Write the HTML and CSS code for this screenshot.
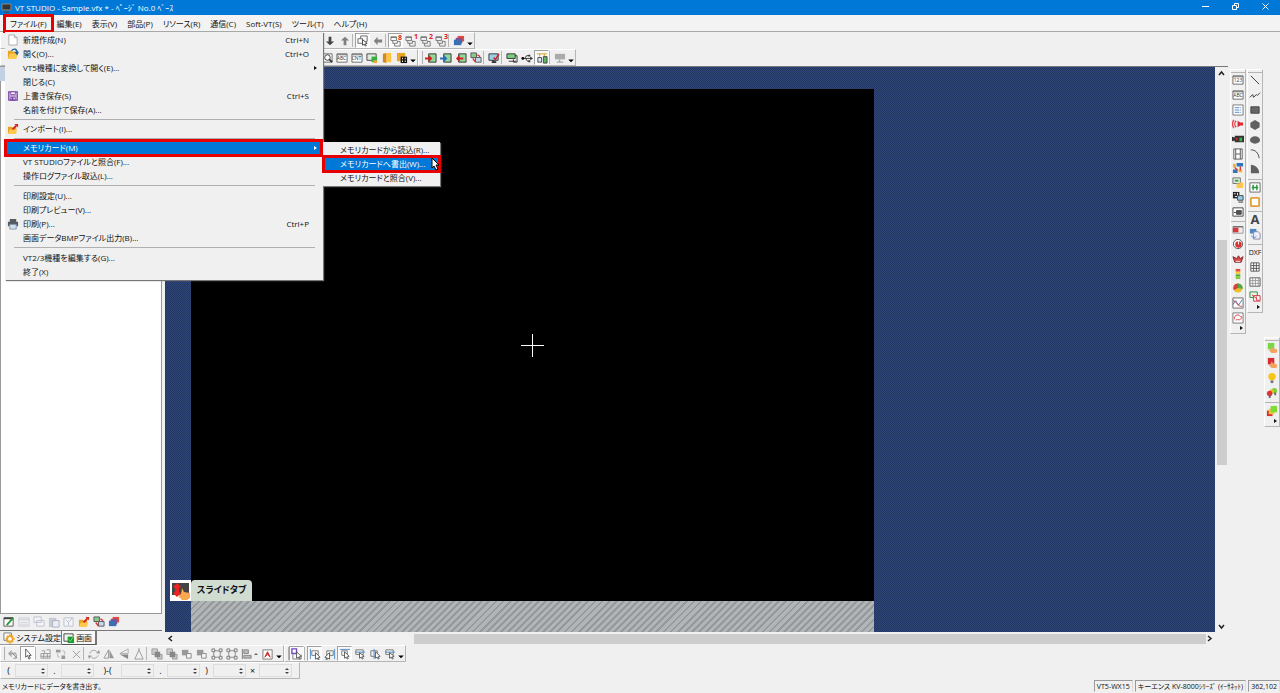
FILE: index.html
```
<!DOCTYPE html>
<html lang="ja">
<head>
    <meta charset="UTF-8">
    <meta name="viewport" content="width=device-width, initial-scale=1.0">
    <title>VT STUDIO</title>
    <link rel="stylesheet" href="styles.css">
</head>
<body>
    <!-- Icon sprite -->
    <svg class="sprite" aria-hidden="true">
        <symbol id="file" viewBox="0 0 13 13"><path d="M2 1h6l3 3v8H2z" fill="#fff" stroke="#aaa"/><path d="M8 1v3h3" fill="none" stroke="#aaa"/></symbol>
        <symbol id="open" viewBox="0 0 13 13"><path d="M1 3h4l1 1h4v7H1z" fill="#e8a321"/><path d="M3 6h9l-2 6H1z" fill="#ffc94d"/><path d="M5 3c2-3 6-2 6 2" fill="none" stroke="#1e6296" stroke-width="1.500"/><path d="M8 4h5l-2 4z" fill="#1e6296"/></symbol>
        <symbol id="import" viewBox="0 0 13 13"><path d="M1 4h4l1 1h4v6H1z" fill="#e8a321"/><path d="M3 7h8l-2 5H1z" fill="#ffc94d"/><path d="M6 7l4-4" stroke="#d8231b" stroke-width="2"/><path d="M8 1h4v4z" fill="#d8231b"/></symbol>
        <symbol id="save" viewBox="0 0 13 13"><path d="M2 2h9v9H2z" fill="#fff" stroke="#7840a4" stroke-width="1.500"/><path d="M4 2h5v3H4z" fill="#fff" stroke="#7840a4"/><path d="M3 6.500h7M4 8h5v3H4z" fill="none" stroke="#7840a4"/><path d="M5 8h2v3H5z" fill="#7840a4"/></symbol>
        <symbol id="print" viewBox="0 0 13 13"><path d="M3 1h7v3H3zM1 4h11v5H1z" fill="#555b62"/><path d="M3 7h7v5H3z" fill="#cfe0ee" stroke="#8799a8"/></symbol>
        <symbol id="down" viewBox="0 0 13 13"><path d="M5 2h3v5h3l-4.500 4L2 7h3z" fill="#444"/></symbol>
        <symbol id="up" viewBox="0 0 13 13"><path d="M5 11h3V6h3L6.500 2 2 6h3z" fill="#808080"/></symbol>
        <symbol id="left" viewBox="0 0 13 13"><path d="M11 5v3H6v3L2 6.500 6 2v3z" fill="#808080"/></symbol>
        <symbol id="pick" viewBox="0 0 13 13"><path d="M4 4V1h7v6H9M1 4h5v5H1z" fill="none" stroke="#666"/><path d="M6 5l5 4-2 .5 1 2-1 .5-1-2-2 1z" fill="#fff" stroke="#444"/></symbol>
        <symbol id="win" viewBox="0 0 13 13"><path d="M1 2h6v4H1zM3 6v3h5V6M5 9v3h6V7H8" fill="none" stroke="#777"/><path d="M1 2.500h6" stroke="#666"/></symbol>
        <symbol id="stack" viewBox="0 0 13 13"><path d="M5 1h7v6H5z" fill="#e54b3d"/><path d="M3 3h7v6H3z" fill="#8b4c87"/><path d="M1 5h8v6H1z" fill="#3b6fb4"/></symbol>
        <symbol id="caret" viewBox="0 0 8 13"><path d="M1 8h6L4 11z" fill="#000"/></symbol>
        <symbol id="search" viewBox="0 0 13 13"><path d="M1 2h11v9H1z" fill="#fff" stroke="#666"/><circle cx="7" cy="6" r="3" fill="#fff" stroke="#333"/><path d="M9 8l3 3" stroke="#333" stroke-width="2"/></symbol>
        <symbol id="frame" viewBox="0 0 13 13"><path d="M1 2h11v9H1zM1 3h11" fill="#fff" stroke="#666"/></symbol>
        <symbol id="monhand" viewBox="0 0 13 13"><path d="M1 2h10v7H1z" fill="#dfe9df" stroke="#444"/><path d="M6 5h6v6H6z" fill="#31b13b"/><path d="M8 9h4v3H8z" fill="#f5a53c"/></symbol>
        <symbol id="book" viewBox="0 0 13 13"><path d="M2 2l4-1v11l-4-1z" fill="#d18b1a"/><path d="M6 1h5v10H6z" fill="#ffc33d"/></symbol>
        <symbol id="bookgrid" viewBox="0 0 13 13"><path d="M1 1h9v9H1z" fill="#e9a527"/><path d="M5 5h7v7H5z" fill="#111"/><path d="M6.500 7h1M9.500 7h1M6.500 10h1M9.500 10h1" stroke="#fff" stroke-width="1.500"/></symbol>
        <symbol id="sendred" viewBox="0 0 13 13"><path d="M4 2h8v9H4z" fill="#94d69a" stroke="#333"/><path d="M0 6h4V3l4 4-4 4V8H0z" fill="#d42020"/></symbol>
        <symbol id="sendblue" viewBox="0 0 13 13"><path d="M4 2h8v9H4z" fill="#94d69a" stroke="#333"/><path d="M0 6h4V3l4 4-4 4V8H0z" fill="#2b6fb5"/></symbol>
        <symbol id="recv" viewBox="0 0 13 13"><path d="M4 2h8v9H4z" fill="#94d69a" stroke="#333"/><path d="M9 6H5V3L1 7l4 4V8h4z" fill="#d42020"/></symbol>
        <symbol id="compare" viewBox="0 0 13 13"><path d="M1 1h6v5H1z" fill="#8ccb90" stroke="#555"/><path d="M6 6h6v5H6z" fill="#c5dcf0" stroke="#555"/><path d="M3 7l3 4M8 3l3 2" stroke="#d83232" stroke-width="1.500"/></symbol>
        <symbol id="monitor" viewBox="0 0 13 13"><path d="M1 2h10v7H1z" fill="#9bd0e8" stroke="#333"/><path d="M4 11h5M6 9v2" stroke="#333" stroke-width="2"/><path d="M6 6l2 2 4-6" fill="none" stroke="#d42020" stroke-width="1.500"/></symbol>
        <symbol id="plc" viewBox="0 0 13 13"><path d="M1 2h9v5H1z" fill="#79cf81" stroke="#333"/><path d="M3 10h8M10 4h2v7H8V8" fill="none" stroke="#333"/></symbol>
        <symbol id="usb" viewBox="0 0 13 13"><path d="M1 7h10M4 7l2-3h3M5 7l2 3h2" fill="none" stroke="#333"/><circle cx="2" cy="7" r="1.500"/><path d="M8 3h2v2H8zM8 9h2v2H8zM10 5l3 2-3 2z" fill="#333"/></symbol>
        <symbol id="net" viewBox="0 0 13 13"><path d="M1 2h11M4 2v3M9 2v3" stroke="#d19a22"/><path d="M2 6h4v5H2z" fill="#d8edff" stroke="#444"/><path d="M8 5h4v7H8z" fill="#61b367" stroke="#444"/></symbol>
        <symbol id="screenoff" viewBox="0 0 13 13"><path d="M1 2h11v6H1z" fill="#aaa"/><path d="M6 8v3M3 11h7" stroke="#aaa" stroke-width="1.500"/></symbol>
        <symbol id="edit" viewBox="0 0 13 13"><path d="M1 2h10v9H1z" fill="#fff" stroke="#555"/><path d="M1 2.500h10" stroke="#444" stroke-width="2"/><path d="M4 10l7-8" stroke="#27983a" stroke-width="2"/></symbol>
        <symbol id="ghostlist" viewBox="0 0 13 13"><path d="M1 2h11v9H1zM1 4h11M3 7h3M7 7h3M3 9h3M7 9h3" fill="none" stroke="#c8ccd6"/></symbol>
        <symbol id="ghostcopy" viewBox="0 0 13 13"><path d="M1 1h8v6H1zM4 5h8v6H4z" fill="#f5f5f8" stroke="#bcc1cf"/></symbol>
        <symbol id="ghostpaste" viewBox="0 0 13 13"><path d="M1 2h8v10H1z" fill="#c5cad6"/><path d="M5 5h7v7H5z" fill="#eceef3" stroke="#aab0c0"/></symbol>
        <symbol id="ghostset" viewBox="0 0 13 13"><path d="M1 2h10v9H1z" fill="#f5f5f8" stroke="#bcc1cf"/><path d="M3 4l3 3 4-5M6 7v3" fill="none" stroke="#b3bccf"/></symbol>
        <symbol id="gear" viewBox="0 0 13 13"><path d="M1 1h8v8H1z" fill="#fff" stroke="#777"/><circle cx="7.500" cy="7.500" r="3" fill="#fff" stroke="#efa51e" stroke-width="2"/><path d="M7.500 2.500v2M7.500 11v2M2.500 7.500h2M11 7.500h2M4 4l1 1M11 11l-1-1M11 4l-1 1M4 11l1-1" stroke="#efa51e" stroke-width="1.500"/></symbol>
        <symbol id="screen" viewBox="0 0 13 13"><path d="M1 2h10v8H1z" fill="#eef5ee" stroke="#444"/><path d="M5 5h7v7H5z" fill="#1e9b37"/><path d="M6 8l2 2 4-6" fill="none" stroke="#7fda6b"/></symbol>
        <symbol id="undo" viewBox="0 0 13 13"><path d="M1 6l4-4v3h5v2H5v3z" fill="#aaa"/><path d="M6 6l5 5M10 7v4H7" fill="none" stroke="#888"/></symbol>
        <symbol id="cursor" viewBox="0 0 13 13"><path d="M4 1v9l2-2 1.500 4 1.500-1-1.500-3H10z" fill="#fff" stroke="#555"/></symbol>
        <symbol id="blocks" viewBox="0 0 13 13"><path d="M1 6h10v5H1zM2 3h3v3M7 2h4v4M4 6v5M8 6v5M1 9h10" fill="none" stroke="#999"/></symbol>
        <symbol id="swap" viewBox="0 0 13 13"><path d="M1 2h5v3H1zM7 8h4v4H7z" fill="#999"/><path d="M8 3c3 0 3 2 2 4M5 10C2 10 3 8 3 6" fill="none" stroke="#aaa"/></symbol>
        <symbol id="cross" viewBox="0 0 13 13"><path d="M3 3l8 8M11 3l-8 8" stroke="#999"/></symbol>
        <symbol id="rotate" viewBox="0 0 13 13"><path d="M2 6c1-4 6-5 8-1M11 8c-2 4-6 4-8 1" fill="none" stroke="#999"/><path d="M9 6h4l-1-4zM4 8H0l1 4z" fill="#999"/></symbol>
        <symbol id="mirror" viewBox="0 0 13 13"><path d="M6 2v9H1z" fill="none" stroke="#999"/><path d="M7 2v9h5z" fill="#999"/></symbol>
        <symbol id="flip" viewBox="0 0 13 13"><path d="M2 6h9V1z" fill="none" stroke="#aaa"/><path d="M2 7h9v5z" fill="#888"/></symbol>
        <symbol id="tri" viewBox="0 0 13 13"><path d="M6.500 2L11 12M6.500 2L2 12h9M6.500 0v3" fill="none" stroke="#999"/></symbol>
        <symbol id="front" viewBox="0 0 13 13"><path d="M1 1h6v6H1zM7 7h5v5H7z" fill="#ccc" stroke="#999"/><path d="M4 4h6v6H4z" fill="#888"/></symbol>
        <symbol id="back" viewBox="0 0 13 13"><path d="M1 2h7v6H1z" fill="#999"/><path d="M6 6h5v5H6z" fill="#f5f5f5" stroke="#888"/></symbol>
        <symbol id="group" viewBox="0 0 13 13"><path d="M3 3h7v7H3z" fill="none" stroke="#888"/><path d="M1 1h3v3H1zM9 1h3v3H9zM1 9h3v3H1zM9 9h3v3H9z" fill="#f0f0f0" stroke="#777"/></symbol>
        <symbol id="align" viewBox="0 0 13 13"><path d="M1.500 1v11" stroke="#777"/><path d="M3 2h5v4H3zM3 8h8v3H3z" fill="#bbb" stroke="#888"/></symbol>
        <symbol id="fonta" viewBox="0 0 13 13"><path d="M1 2h10v10H1z" fill="#fff" stroke="#777"/><path d="M3 10l3-6 3 6-3-3z" fill="#c33" stroke="#c33"/></symbol>
        <symbol id="snap" viewBox="0 0 13 13"><path d="M1 1h5v5H1z" fill="#fff" stroke="#7348bf" stroke-width="1.500"/><path d="M2 7v5h9V7" fill="none" stroke="#777"/><path d="M6 4l5 5-2 .5 1 2-1 .5-1-2-2 1z" fill="#fff" stroke="#555"/></symbol>
        <symbol id="snapl" viewBox="0 0 13 13"><path d="M1.500 1v11" stroke="#4b8ac8"/><path d="M3 3h7v5H3z" fill="none" stroke="#777"/><path d="M7 5l5 5-2 .5 1 2-1 .5-1-2-2 1z" fill="#fff" stroke="#555"/></symbol>
        <symbol id="snapt" viewBox="0 0 13 13"><path d="M1 1.500h11" stroke="#4b8ac8"/><path d="M3 3h6v5H3z" fill="none" stroke="#777"/><path d="M6 4l5 5-2 .5 1 2-1 .5-1-2-2 1z" fill="#fff" stroke="#555"/></symbol>
        <symbol id="snapc" viewBox="0 0 13 13"><path d="M2 3h7v6H2z" fill="none" stroke="#777"/><path d="M5.500 1v11" stroke="#4b8ac8"/><path d="M7 4l5 5-2 .5 1 2-1 .5-1-2-2 1z" fill="#fff" stroke="#555"/></symbol>
        <symbol id="snapm" viewBox="0 0 13 13"><path d="M2 2h8v5H2z" fill="none" stroke="#777"/><path d="M1 4.500h11" stroke="#4b8ac8"/><path d="M6 5l5 4-2 .5 1 2-1 .5-1-2-2 1z" fill="#fff" stroke="#555"/></symbol>
        <symbol id="list" viewBox="0 0 13 13"><path d="M1 1h11v11H1z" fill="#fff" stroke="#777"/><path d="M3 4h7M3 6.500h7M3 9h7" stroke="#4b86c6" stroke-dasharray="5 1"/></symbol>
        <symbol id="alarm" viewBox="0 0 13 13"><path d="M6 3l3 2h3v3H9l-3 2z" fill="#d92b35"/><path d="M2 2c-2 3-2 6 0 9M4.500 3c-2 2-2 5 0 7" fill="none" stroke="#e8474e" stroke-width="1.500"/></symbol>
        <symbol id="camera" viewBox="0 0 13 13"><path d="M0 4l3 1v3L0 9zM3 3h10v7H3z" fill="#333"/><path d="M8 5h3v4H8z" fill="#3dad49"/><path d="M4 5h2v3H4z" fill="#b33"/></symbol>
        <symbol id="film" viewBox="0 0 13 13"><path d="M2 1h9v11H2zM4 1v11M9 1v11M4 6.500h5" fill="#fff" stroke="#555"/></symbol>
        <symbol id="route" viewBox="0 0 13 13"><path d="M5 1h7v4H5zM1 8h5v4H1z" fill="#2f75bd"/><path d="M1 2h3v4H1zM7 8h4v3H7z" fill="#f5ae39"/><path d="M3 6l3 3M9 5v4" stroke="#d33" stroke-width="1.500"/></symbol>
        <symbol id="folders" viewBox="0 0 13 13"><path d="M1 1h8v6H1z" fill="#e9f5e8" stroke="#666"/><path d="M3 4h4" stroke="#2ca43b" stroke-width="2"/><path d="M5 7h3l1-1h3v6H5z" fill="#ffc64e"/></symbol>
        <symbol id="qr" viewBox="0 0 13 13"><path d="M1 1h7v7H1z" fill="#222"/><path d="M2 3h2M6 2v3M3 6h3" stroke="#fff"/><path d="M6 5h6v5H6z" fill="#91cce9" stroke="#444"/><path d="M7 12h5" stroke="#333"/></symbol>
        <symbol id="io" viewBox="0 0 13 13"><path d="M1 2h11v9H1z" fill="#fff" stroke="#444"/><path d="M5 5h5v4H5zM2 7h3" fill="#555" stroke="#444"/></symbol>
        <symbol id="switch" viewBox="0 0 13 13"><path d="M1 3h11v7H1z" fill="#eee" stroke="#999"/><path d="M1 4h6v5H1z" fill="#dc3737"/><path d="M1 3h11" stroke="#555"/></symbol>
        <symbol id="dial" viewBox="0 0 13 13"><circle cx="6.500" cy="6.500" r="5" fill="#fff" stroke="#555"/><circle cx="7" cy="7" r="3.500" fill="#d93434"/><path d="M7 7V2" stroke="#fff"/></symbol>
        <symbol id="meter" viewBox="0 0 13 13"><path d="M1 4l2 6h7l2-6-3 2-2-3-2 3z" fill="#da4545" stroke="#7d2c2c"/><path d="M4 9h5" stroke="#fff"/></symbol>
        <symbol id="bar" viewBox="0 0 13 13"><path d="M4 1h5v3H4z" fill="#e34d35"/><path d="M4 4h5v3H4z" fill="#f5cc39"/><path d="M4 7h5v2H4z" fill="#49a846"/><path d="M4 9h5v3H4z" fill="#8dc83f"/></symbol>
        <symbol id="pie" viewBox="0 0 13 13"><circle cx="6.500" cy="6.500" r="5" fill="#eac22e"/><path d="M6.500 6.500v-5A5 5 0 0 0 2 9z" fill="#dc4338"/><path d="M6.500 6.500v-5a5 5 0 0 1 5 6z" fill="#50a848"/></symbol>
        <symbol id="trend" viewBox="0 0 13 13"><path d="M1 1h11v11H1z" fill="#fff" stroke="#666"/><path d="M1 8l3-4 3 5 4-6" fill="none" stroke="#3871bd"/><path d="M1 4c4 0 5 7 10 6" fill="none" stroke="#d33"/></symbol>
        <symbol id="xy" viewBox="0 0 13 13"><path d="M1 1h11v11H1z" fill="#fff" stroke="#777"/><path d="M3 8c-2-4 4-6 5-4s4 0 2 3-4 0-6 2" fill="none" stroke="#d33"/></symbol>
        <symbol id="line" viewBox="0 0 13 13"><path d="M2 2l9 9" stroke="#333"/></symbol>
        <symbol id="poly" viewBox="0 0 13 13"><path d="M1 9l3-3 1 3 3-3 1 1 3-3" fill="none" stroke="#333"/></symbol>
        <symbol id="rect" viewBox="0 0 13 13"><path d="M2 3h9v7H2z" fill="#666" stroke="#444"/></symbol>
        <symbol id="hex" viewBox="0 0 13 13"><path d="M6.500 1l5 3v5l-5 3-5-3V4z" fill="#606060"/></symbol>
        <symbol id="oval" viewBox="0 0 13 13"><ellipse cx="6.500" cy="6.500" rx="5.500" ry="4" fill="#606060"/></symbol>
        <symbol id="arc" viewBox="0 0 13 13"><path d="M2 2c5 0 8 3 9 9" fill="none" stroke="#444"/></symbol>
        <symbol id="fan" viewBox="0 0 13 13"><path d="M2 2c5 0 9 4 9 9H2z" fill="#606060"/></symbol>
        <symbol id="scale" viewBox="0 0 13 13"><path d="M1 2h11v10H1z" fill="#fff" stroke="#666"/><path d="M4.500 4v6M8.500 4v6M3 7h7" stroke="#24983a" stroke-width="1.500"/></symbol>
        <symbol id="round" viewBox="0 0 13 13"><rect x="2" y="2" width="9" height="9" rx="1" fill="#fff" stroke="#e1a03c" stroke-width="2"/></symbol>
        <symbol id="pastepic" viewBox="0 0 13 13"><path d="M1 1h7v5H1z" fill="#4b86c6"/><path d="M5 4h5l2 2v6H5z" fill="#eef" stroke="#889"/><path d="M3 8c0 3 3 3 5 1" fill="none" stroke="#4b86c6"/></symbol>
        <symbol id="grid" viewBox="0 0 13 13"><path d="M2 2h9v9H2zM2 5h9M2 8h9M5 2v9M8 2v9" fill="#fff" stroke="#555"/></symbol>
        <symbol id="table" viewBox="0 0 13 13"><path d="M1 2h11v9H1z" fill="#fff" stroke="#555"/><path d="M1 5h11M1 8h11M4 2v9M7 2v9M10 2v9" stroke="#999"/></symbol>
        <symbol id="link" viewBox="0 0 13 13"><path d="M1 1h8v6H1z" fill="#e8f5e8" stroke="#2b8938"/><path d="M5 5h7v6H5z" fill="#fff" stroke="#c34"/><path d="M3 4l5 4M8 6v4h3" fill="none" stroke="#d33"/></symbol>
        <symbol id="handg" viewBox="0 0 13 13"><path d="M2 1h7v7H2z" fill="#79d743"/><path d="M5 8l1-3 2 2 4 1v3l-2 1H6L3 9z" fill="#f2a45e"/></symbol>
        <symbol id="handr" viewBox="0 0 13 13"><path d="M2 1h7v7H2z" fill="#d72e35"/><path d="M5 8l1-3 2 2 4 1v3l-2 1H6L3 9z" fill="#f2a45e"/></symbol>
        <symbol id="lamp" viewBox="0 0 13 13"><circle cx="6.500" cy="5" r="4" fill="#f6c515"/><path d="M5 9h3v3H5z" fill="#777"/></symbol>
        <symbol id="lamps" viewBox="0 0 13 13"><circle cx="9" cy="4" r="3" fill="#7bd13c"/><circle cx="6" cy="5" r="2.500" fill="#f0bc2d"/><circle cx="4" cy="7" r="3" fill="#dc3535"/><path d="M3 9h2v3H3zM9 6h2v3H9z" fill="#666"/></symbol>
        <symbol id="parts" viewBox="0 0 13 13"><path d="M1 6h6v6H1z" fill="#db2d32"/><path d="M3 4h6v6H3z" fill="#f3c82e"/><path d="M5 1h7v7H5z" fill="#7fdb38"/></symbol>
    </svg>

    <div class="window">
        <header class="titlebar">
            <svg class="app-icon" viewBox="0 0 11 11"><path d="M1 2h9v6H1z" fill="#353535" stroke="#888"/><path d="M3 10h5" stroke="#444"/></svg>
            <h1>VT STUDIO - Sample.vfx * - ﾍﾟｰｼﾞ No.0 ﾍﾞｰｽ</h1>
            <div class="window-buttons">
                <button aria-label="最小化"><svg viewBox="0 0 9 9"><path d="M1 4.500h7"/></svg></button>
                <button aria-label="元に戻す"><svg viewBox="0 0 9 9"><path d="M1.500 3.500h4v4h-4zM3.500 3V1.500h4v4H6"/></svg></button>
                <button aria-label="閉じる"><svg viewBox="0 0 9 9"><path d="M1.500 1.500l6 6M7.500 1.500l-6 6"/></svg></button>
            </div>
        </header>

        <nav class="menubar">
            <div class="menu-root">
                <button class="active">ファイル(F)</button>
                <div class="menu file-menu">
                    <button><svg><use href="#file"/></svg>新規作成(N)<kbd>Ctrl+N</kbd></button>
                    <button><svg><use href="#open"/></svg>開く(O)...<kbd>Ctrl+O</kbd></button>
                    <button>VT5機種に変換して開く(E)...<i class="more"></i></button>
                    <button>閉じる(C)</button>
                    <button><svg><use href="#save"/></svg>上書き保存(S)<kbd>Ctrl+S</kbd></button>
                    <button>名前を付けて保存(A)...</button>
                    <hr>
                    <button><svg><use href="#import"/></svg>インポート(I)...</button>
                    <hr>
                    <div class="menu-root">
                        <button class="selected">メモリカード(M)<i class="more"></i></button>
                        <div class="menu sub-menu">
                            <button>メモリカードから読込(R)...</button>
                            <button class="selected">メモリカードへ書出(W)...</button>
                            <button>メモリカードと照合(V)...</button>
                            <svg class="pointer" viewBox="0 0 10 14"><path d="M2 1v10l2-2 2 4 2-1-2-4h3z" fill="#fff" stroke="#000"/></svg>
                        </div>
                    </div>
                    <button>VT STUDIOファイルと照合(F)...</button>
                    <button>操作ログファイル取込(L)...</button>
                    <hr class="wide">
                    <button>印刷設定(U)...</button>
                    <button>印刷プレビュー(V)...</button>
                    <button><svg><use href="#print"/></svg>印刷(P)...<kbd>Ctrl+P</kbd></button>
                    <button>画面データBMPファイル出力(B)...</button>
                    <hr class="wide">
                    <button>VT2/3機種を編集する(G)...</button>
                    <button>終了(X)</button>
                </div>
            </div>
            <button>編集(E)</button>
            <button>表示(V)</button>
            <button>部品(P)</button>
            <button>リソース(R)</button>
            <button>通信(C)</button>
            <button>Soft-VT(S)</button>
            <button>ツール(T)</button>
            <button>ヘルプ(H)</button>
        </nav>

        <div class="toolbar-row">
            <div class="toolbar main-tools">
                <button aria-label="次へ"><svg><use href="#down"/></svg></button>
                <button aria-label="前へ"><svg><use href="#up"/></svg></button>
                <span class="sep"></span>
                <button class="pressed" aria-label="選択"><svg><use href="#pick"/></svg></button>
                <button aria-label="戻る"><svg><use href="#left"/></svg></button>
                <span class="sep"></span>
                <button class="pressed" aria-label="全ウィンドウ"><svg><use href="#win"/></svg><b>8</b></button>
                <button aria-label="ウィンドウ1"><svg><use href="#win"/></svg><b>1</b></button>
                <button aria-label="ウィンドウ2"><svg><use href="#win"/></svg><b>2</b></button>
                <button aria-label="ウィンドウ3"><svg><use href="#win"/></svg><b>3</b></button>
                <span class="sep"></span>
                <button aria-label="レイヤ"><svg><use href="#stack"/></svg></button>
                <button class="drop" aria-label="その他"><svg><use href="#caret"/></svg></button>
            </div>
        </div>
        <div class="toolbar-row">
            <div class="toolbar view-tools">
                <button aria-label="検索"><svg><use href="#search"/></svg></button>
                <button aria-label="文字列"><svg><use href="#frame"/></svg><small>ABC</small></button>
                <button aria-label="カウント"><svg><use href="#frame"/></svg><small>CNT</small></button>
                <button aria-label="動作確認"><svg><use href="#monhand"/></svg></button>
                <button aria-label="ライブラリ"><svg><use href="#book"/></svg></button>
                <button aria-label="部品ライブラリ"><svg><use href="#bookgrid"/></svg></button>
                <button class="drop" aria-label="その他"><svg><use href="#caret"/></svg></button>
            </div>
            <div class="toolbar">
                <span class="grip"></span>
                <button aria-label="送信"><svg><use href="#sendred"/></svg></button>
                <button aria-label="差分送信"><svg><use href="#sendblue"/></svg></button>
                <button aria-label="受信"><svg><use href="#recv"/></svg></button>
                <button aria-label="照合"><svg><use href="#compare"/></svg></button>
                <span class="sep"></span>
                <button aria-label="モニタ"><svg><use href="#monitor"/></svg></button>
                <span class="sep"></span>
                <button aria-label="PLC転送"><svg><use href="#plc"/></svg></button>
                <button aria-label="USB"><svg><use href="#usb"/></svg></button>
                <button class="pressed" aria-label="ネットワーク"><svg><use href="#net"/></svg></button>
                <span class="sep"></span>
                <button aria-label="画面"><svg><use href="#screenoff"/></svg></button>
                <button class="drop" aria-label="その他"><svg><use href="#caret"/></svg></button>
            </div>
        </div>

        <main class="workspace">
            <aside class="project">
                <div class="project-title"></div>
                <div class="tree"></div>
                <div class="project-tools">
                    <button aria-label="編集"><svg><use href="#edit"/></svg></button>
                    <button aria-label="一覧"><svg><use href="#ghostlist"/></svg></button>
                    <button aria-label="コピー"><svg><use href="#ghostcopy"/></svg></button>
                    <button aria-label="貼り付け"><svg><use href="#ghostpaste"/></svg></button>
                    <button aria-label="設定"><svg><use href="#ghostset"/></svg></button>
                    <button aria-label="インポート"><svg><use href="#import"/></svg></button>
                    <button aria-label="比較"><svg><use href="#compare"/></svg></button>
                    <button aria-label="レイヤ"><svg><use href="#stack"/></svg></button>
                </div>
                <div class="tabs">
                    <button><svg><use href="#gear"/></svg>システム設定</button>
                    <button class="current"><svg><use href="#screen"/></svg>画面</button>
                </div>
            </aside>

            <section class="editor">
                <div class="canvas">
                    <div class="stage">
                        <svg class="crosshair" viewBox="0 0 23 23"><path d="M11.500 0v23M0 11.500h23"/></svg>
                        <div class="slide-tab">
                            <svg viewBox="0 0 21 21"><path d="M0 0h21v21H0z" fill="#fff"/><path d="M2 3h17v12H2z" fill="#444"/><path d="M7 3l4 4-2 1v4l2 1-4 4-4-4 2-1V8L3 7z" fill="#e22"/><path d="M11 14l1-6 2 4 6 1v5l-3 2h-5l-4-4z" fill="#f9a84f"/></svg>
                            <span>スライドタブ</span>
                        </div>
                    </div>
                    <div class="hatch"></div>
                </div>
                <div class="scroll vertical">
                    <svg viewBox="0 0 7 7"><path d="M1 5l2.500-3L6 5"/></svg>
                    <span class="track"><span class="thumb"></span></span>
                    <svg viewBox="0 0 7 7"><path d="M1 2l2.500 3L6 2"/></svg>
                </div>
                <div class="scroll horizontal">
                    <svg viewBox="0 0 7 7"><path d="M5 1L2 3.500 5 6"/></svg>
                    <span class="track"><span class="thumb"></span></span>
                    <svg viewBox="0 0 7 7"><path d="M2 1l3 2.500L2 6"/></svg>
                </div>
            </section>

            <div class="palettes">
                <div class="palette parts">
                    <span class="handle"></span>
                    <button aria-label="数値"><svg><use href="#frame"/></svg><small>123</small></button>
                    <button aria-label="文字"><svg><use href="#frame"/></svg><small>ABC</small></button>
                    <button aria-label="リスト"><svg><use href="#list"/></svg></button>
                    <button aria-label="アラーム"><svg><use href="#alarm"/></svg></button>
                    <button aria-label="カメラ"><svg><use href="#camera"/></svg></button>
                    <button aria-label="動画"><svg><use href="#film"/></svg></button>
                    <button aria-label="経路"><svg><use href="#route"/></svg></button>
                    <button aria-label="レシピ"><svg><use href="#folders"/></svg></button>
                    <button aria-label="コード"><svg><use href="#qr"/></svg></button>
                    <button aria-label="入出力"><svg><use href="#io"/></svg></button>
                    <span class="rule"></span>
                    <button aria-label="スライド"><svg><use href="#switch"/></svg></button>
                    <button aria-label="ダイヤル"><svg><use href="#dial"/></svg></button>
                    <button aria-label="メータ"><svg><use href="#meter"/></svg></button>
                    <button aria-label="バー"><svg><use href="#bar"/></svg></button>
                    <button aria-label="円グラフ"><svg><use href="#pie"/></svg></button>
                    <button aria-label="トレンド"><svg><use href="#trend"/></svg></button>
                    <button aria-label="XYグラフ"><svg><use href="#xy"/></svg></button>
                    <i class="more"></i>
                </div>
                <div class="palette shapes">
                    <span class="handle"></span>
                    <button aria-label="直線"><svg><use href="#line"/></svg></button>
                    <button aria-label="連続線"><svg><use href="#poly"/></svg></button>
                    <button aria-label="四角"><svg><use href="#rect"/></svg></button>
                    <button aria-label="多角形"><svg><use href="#hex"/></svg></button>
                    <button aria-label="楕円"><svg><use href="#oval"/></svg></button>
                    <button aria-label="円弧"><svg><use href="#arc"/></svg></button>
                    <button aria-label="扇形"><svg><use href="#fan"/></svg></button>
                    <span class="rule"></span>
                    <button aria-label="目盛"><svg><use href="#scale"/></svg></button>
                    <button aria-label="枠"><svg><use href="#round"/></svg></button>
                    <span class="rule"></span>
                    <button class="letter">A</button>
                    <button aria-label="画像"><svg><use href="#pastepic"/></svg></button>
                    <span class="rule"></span>
                    <button class="dxf">DXF</button>
                    <button aria-label="格子"><svg><use href="#grid"/></svg></button>
                    <button aria-label="表"><svg><use href="#table"/></svg></button>
                    <button aria-label="リンク"><svg><use href="#link"/></svg></button>
                    <i class="more"></i>
                </div>
                <div class="palette lamps">
                    <span class="handle"></span>
                    <button aria-label="スイッチ緑"><svg><use href="#handg"/></svg></button>
                    <button aria-label="スイッチ赤"><svg><use href="#handr"/></svg></button>
                    <button aria-label="ランプ"><svg><use href="#lamp"/></svg></button>
                    <button aria-label="多色ランプ"><svg><use href="#lamps"/></svg></button>
                    <span class="rule"></span>
                    <button aria-label="部品"><svg><use href="#parts"/></svg></button>
                    <i class="more"></i>
                </div>
            </div>
        </main>

        <div class="toolbar-row">
            <div class="toolbar">
                <span class="grip"></span>
                <button aria-label="元に戻す"><svg><use href="#undo"/></svg></button>
                <button class="pressed" aria-label="選択"><svg><use href="#cursor"/></svg></button>
                <span class="sep"></span>
                <button aria-label="整列"><svg><use href="#blocks"/></svg></button>
                <button aria-label="入替"><svg><use href="#swap"/></svg></button>
                <button aria-label="削除"><svg><use href="#cross"/></svg></button>
                <span class="sep"></span>
                <button aria-label="回転"><svg><use href="#rotate"/></svg></button>
                <button aria-label="左右反転"><svg><use href="#mirror"/></svg></button>
                <button aria-label="上下反転"><svg><use href="#flip"/></svg></button>
                <button aria-label="頂点"><svg><use href="#tri"/></svg></button>
                <span class="sep"></span>
                <button aria-label="最前面"><svg><use href="#front"/></svg></button>
                <button aria-label="最背面"><svg><use href="#front"/></svg></button>
                <button aria-label="前面"><svg><use href="#back"/></svg></button>
                <button aria-label="背面"><svg><use href="#back"/></svg></button>
                <button aria-label="グループ化"><svg><use href="#group"/></svg></button>
                <button aria-label="グループ解除"><svg><use href="#group"/></svg></button>
                <button aria-label="配置"><svg><use href="#align"/></svg></button>
                <i class="tiny-caret"></i>
                <button aria-label="文字色"><svg><use href="#fonta"/></svg></button>
                <button class="drop" aria-label="その他"><svg><use href="#caret"/></svg></button>
            </div>
            <div class="toolbar">
                <span class="grip"></span>
                <button class="pressed" aria-label="スナップ"><svg><use href="#snap"/></svg></button>
                <span class="sep"></span>
                <button class="pressed" aria-label="左スナップ"><svg><use href="#snapl"/></svg></button>
                <button aria-label="右スナップ"><svg class="turned"><use href="#snapl"/></svg></button>
                <button class="pressed" aria-label="上スナップ"><svg><use href="#snapt"/></svg></button>
                <button aria-label="下スナップ"><svg><use href="#snapm"/></svg></button>
                <button aria-label="中央スナップ"><svg><use href="#snapc"/></svg></button>
                <button aria-label="中心スナップ"><svg><use href="#snapm"/></svg></button>
                <button class="drop" aria-label="その他"><svg><use href="#caret"/></svg></button>
            </div>
        </div>
        <div class="toolbar-row">
            <div class="toolbar coords">
                <span>(</span>
                <label class="spin"><input aria-label="X1"><i></i></label>
                <span>.</span>
                <label class="spin"><input aria-label="Y1"><i></i></label>
                <span class="wide">)-(</span>
                <label class="spin"><input aria-label="X2"><i></i></label>
                <span>.</span>
                <label class="spin"><input aria-label="Y2"><i></i></label>
                <span>)</span>
                <label class="spin"><input aria-label="幅"><i></i></label>
                <span>×</span>
                <label class="spin"><input aria-label="高さ"><i></i></label>
            </div>
        </div>
        <footer class="statusbar">
            <p>メモリカードにデータを書き出す。</p>
            <span>VT5-WX15</span>
            <span>キーエンス KV-8000ｼﾘｰｽﾞ (ｲｰｻﾈｯﾄ)</span>
            <span>362,102</span>
        </footer>
    </div>
</body>
</html>
```
FILE: styles.css
```
* {
    box-sizing: border-box;
}

body, html {
    margin: 0;
    padding: 0;
    height: 100%;
    overflow: hidden;
    font-family: "Open Sans", "Noto Sans CJK JP", sans-serif;
    font-size: 8px;
    font-feature-settings: "palt";
    color: #111;
    background: #f0f0f0;
}

button, input {
    margin: 0;
    padding: 0;
    border: none;
    background: none;
    color: inherit;
    font: inherit;
    font-feature-settings: inherit;
    white-space: nowrap;
}

.sprite {
    display: none;
}

.window {
    display: flex;
    flex-direction: column;
    height: 100vh;
}

/* Title bar */
.titlebar {
    display: flex;
    align-items: center;
    height: 15px;
    padding-left: 1px;
    background: #0078d7;
    color: #fff;
}

.app-icon {
    width: 11px;
    height: 11px;
}

.titlebar h1 {
    flex: 1;
    margin: 0 0 0 3px;
    font-size: 8px;
    font-weight: 400;
}

.window-buttons {
    display: flex;
}

.window-buttons button {
    width: 30px;
    height: 15px;
}

.window-buttons svg {
    width: 9px;
    height: 9px;
    fill: none;
    stroke: #fff;
}

/* Menu bar */
.menubar {
    display: flex;
    align-items: center;
    height: 17px;
    padding-left: 5px;
    background: #f3f3f3;
    border-bottom: 1px solid #a8a8a8;
}

.menubar > button,
.menubar > .menu-root > button {
    height: 15px;
    padding: 0 5px;
}

.menu-root {
    position: relative;
}

.menubar .active {
    outline: 3px solid #e60000;
    outline-offset: -1px;
}

.menu {
    position: absolute;
    z-index: 10;
    display: flex;
    flex-direction: column;
    background: #f0f0f0;
    box-shadow: 1px 1px 1px #777;
}

.file-menu {
    top: 16px;
    left: 0;
    width: 318px;
    padding: 1px 2px 1px 1px;
}

.menu button {
    position: relative;
    display: flex;
    align-items: center;
    width: 100%;
    height: 14px;
    padding: 0 12px 0 17px;
    line-height: 14px;
}

.menu button svg {
    position: absolute;
    left: 1px;
    width: 12px;
    height: 12px;
}

.menu kbd {
    margin-left: auto;
    font: inherit;
}

.menu hr {
    width: 301px;
    height: 5px;
    margin: 0 0 0 8px;
    border: none;
    background: linear-gradient(#b0b0b0, #b0b0b0) center / 100% 1px no-repeat;
}

.menu hr.wide {
    height: 6px;
}

.menu .selected {
    z-index: 2;
    background: #0078d7;
    color: #fff;
    outline: 3px solid #e60000;
    outline-offset: -1px;
}

.more {
    border: 2px solid transparent;
    border-left: 3px solid currentColor;
    border-right: none;
}

.menu .more {
    margin: 0 -8px 0 auto;
}

.sub-menu {
    top: 1px;
    left: 317px;
    width: 117px;
    padding: 1px;
}

.sub-menu button {
    padding: 0 0 0 16px;
}

.pointer {
    position: absolute;
    z-index: 3;
    top: 15px;
    right: 0;
    width: 10px;
    height: 14px;
}

/* Tool bars */
.toolbar-row {
    display: flex;
    flex: none;
    height: 17px;
}

.toolbar {
    display: flex;
    align-items: center;
    height: 17px;
    border: 1px solid;
    border-color: #fff #b5b5b5 #b5b5b5 #fff;
}

.main-tools,
.view-tools {
    justify-content: flex-end;
    width: 475px;
}

.view-tools {
    width: 418px;
}

.toolbar button,
.project-tools button {
    position: relative;
    display: flex;
    align-items: center;
    justify-content: center;
    flex: none;
    width: 15px;
    height: 15px;
}

.toolbar svg,
.project-tools svg,
.palette svg {
    width: 12px;
    height: 12px;
}

.toolbar .turned {
    transform: scaleX(-1);
}

.toolbar .pressed {
    background: #fafafa;
    border: 1px solid;
    border-color: #a0a0a0 #fff #fff #a0a0a0;
}

.toolbar .drop {
    width: 8px;
}

.toolbar .drop svg {
    width: 8px;
}

.toolbar b {
    position: absolute;
    top: 0;
    right: 0;
    color: #d22;
    font-size: 7px;
    line-height: 8px;
}

.toolbar small,
.palette small {
    position: absolute;
    inset: 0;
    display: grid;
    place-items: center;
    font-size: 5px;
    color: #333;
}

.sep {
    width: 3px;
    height: 13px;
    border-left: 1px solid #b5b5b5;
    flex: none;
}

.grip {
    width: 4px;
    height: 13px;
    border-right: 1px solid #b0b0b0;
    flex: none;
}

.tiny-caret {
    margin: 0 2px 0 0;
    border: 2px solid transparent;
    border-top: none;
    border-bottom: 2px solid #666;
}

/* Work area */
.workspace {
    display: flex;
    flex: 1;
    min-height: 0;
}

.project {
    display: flex;
    flex-direction: column;
    width: 162px;
    margin-right: 3px;
}

.project-title {
    height: 15px;
    background: #c3d2e2;
    border-top: 1px solid #999;
}

.tree {
    flex: 1;
    background: #fff;
    border: 1px solid #999;
    border-top: none;
}

.project-tools {
    display: flex;
    align-items: center;
    height: 17px;
    padding-left: 1px;
    border-bottom: 1px solid #777;
}

.tabs {
    display: flex;
    height: 14px;
    line-height: 13px;
}

.tabs button {
    display: flex;
    align-items: center;
    gap: 1px;
    padding: 0 0 0 3px;
    border-right: 1px solid #777;
    border-bottom: 1px solid #999;
}

.tabs svg {
    width: 12px;
    height: 12px;
}

.tabs .current {
    padding: 0 3px 0 1px;
    border-right: 2px solid #777;
    border-bottom-color: #555;
    background: #f7f7f7;
}

.editor {
    flex: 1;
    display: grid;
    grid-template: 1fr 13px / 1fr 13px;
    border-top: 1px solid #777;
}

.canvas {
    display: flex;
    flex-direction: column;
    padding: 22px 0 0 26px;
    background: repeating-conic-gradient(#31467a 0 25%, #21365f 0 50%) 0 0 / 2px 2px;
}

.stage {
    position: relative;
    display: flex;
    flex: 1;
    align-items: center;
    justify-content: center;
    background: #000;
}

.stage,
.hatch {
    width: 66.700%;
}

.crosshair {
    width: 23px;
    height: 23px;
    stroke: #fff;
}

.slide-tab {
    position: absolute;
    left: -21px;
    bottom: 0;
    display: flex;
    height: 21px;
}

.slide-tab svg {
    width: 21px;
    height: 21px;
}

.slide-tab span {
    padding: 0 6px;
    border-radius: 4px 4px 0 0;
    background: #d1dcd1;
    font-size: 9px;
    font-weight: 700;
    line-height: 20px;
    white-space: nowrap;
}

.hatch {
    height: 31px;
    background: repeating-linear-gradient(135deg, #96999b 0 2px, #b2b5b7 2px 5px);
}

.scroll {
    display: flex;
    align-items: center;
    background: #f0f0f0;
}

.scroll svg {
    width: 7px;
    height: 7px;
    fill: none;
    stroke: #222;
    stroke-width: 1.500;
}

.track {
    display: flex;
    flex: 1;
}

.thumb {
    background: #cdcdcd;
}

.vertical {
    flex-direction: column;
    padding: 3px 0 2px;
}

.vertical .track {
    flex-direction: column;
    padding: 163px 0 158px;
}

.vertical .thumb {
    width: 10px;
    flex: 1;
}

.horizontal {
    padding: 0 2px;
}

.horizontal .track {
    padding: 0 0 0 240px;
}

.horizontal .thumb {
    flex: 1;
    height: 10px;
}

/* Palettes on the right */
.palettes {
    display: flex;
    align-items: flex-start;
    gap: 1px;
    padding: 3px 0 0 2px;
}

.palette {
    display: flex;
    flex-direction: column;
    align-items: center;
    width: 16px;
    border: 1px solid;
    border-color: #fff #b5b5b5 #b5b5b5 #fff;
}

.palette button {
    position: relative;
    display: grid;
    place-items: center;
    flex: 1;
    width: 100%;
    min-height: 0;
}

.parts {
    height: 265px;
}

.shapes {
    height: 244px;
}

.lamps {
    height: 90px;
    margin-top: 268px;
}

.handle,
.rule {
    width: 100%;
    height: 3px;
    border-bottom: 1px solid #b5b5b5;
}

.palette .more {
    margin: 1px 0 3px 6px;
}

.palette .letter {
    font-size: 13px;
    font-weight: 700;
    line-height: 13px;
    color: #444;
}

.palette .dxf {
    font-size: 7px;
}

/* Coordinates and status */
.coords {
    padding: 0 7px 0 1px;
    font-size: 9px;
}

.coords span {
    width: 13px;
    text-align: center;
}

.coords .wide {
    width: 27px;
}

.spin {
    display: flex;
    align-items: center;
    width: 33px;
    height: 13px;
    border: 1px solid #ddd;
}

.spin input {
    flex: 1;
    min-width: 0;
}

.spin i {
    display: flex;
    flex-direction: column;
    align-items: center;
    gap: 2px;
    width: 9px;
}

.spin i::before,
.spin i::after {
    content: "";
    border: 2px solid transparent;
}

.spin i::before {
    border-top: none;
    border-bottom-color: #444;
}

.spin i::after {
    border-bottom: none;
    border-top-color: #444;
}

.statusbar {
    display: flex;
    align-items: center;
    gap: 2px;
    height: 14px;
    font-size: 7px;
}

.statusbar p {
    flex: 1;
    margin: 0 0 0 2px;
}

.statusbar span {
    height: 12px;
    padding: 0 2px;
    border: 1px solid;
    border-color: #999 #ddd #f0f0f0 #999;
    line-height: 11px;
}
```
